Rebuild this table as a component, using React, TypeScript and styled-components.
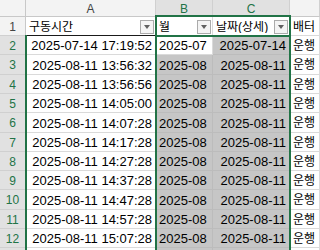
import React from "react";
import styled, { createGlobalStyle, css } from "styled-components";

const GREEN = "#217346";

const Global = createGlobalStyle`
  html, body { margin: 0; padding: 0; background: #ffffff; overflow: hidden; }
  body { font-family: "Liberation Sans", "Noto Sans CJK KR", sans-serif; }
  #root { width: 320px; height: 250px; }
`;

const Sheet = styled.div`
  position: relative;
  width: 320px;
  height: 250px;
  overflow: hidden;
  display: flex;
  flex-direction: column;
`;

const Row = styled.div<{ $h: number }>`
  display: grid;
  grid-template-columns: 26px 130px 57px 77px 1fr;
  height: ${(p) => p.$h}px;
  flex: none;
`;

const Corner = styled.div`
  background: #f3f3f3;
  border-right: 1px solid #c8c8c8;
  border-bottom: 1px solid #c8c8c8;
  box-sizing: border-box;
`;

const ColHead = styled.div<{ $sel?: boolean }>`
  box-sizing: border-box;
  display: flex;
  align-items: center;
  justify-content: center;
  font-size: 12px;
  line-height: 1;
  padding-top: 1px;
  background: ${(p) => (p.$sel ? "#e1e1e1" : "#f3f3f3")};
  color: ${(p) => (p.$sel ? GREEN : "#444444")};
  border-right: 1px solid #d0d0d0;
  border-bottom: 1px solid #c8c8c8;
`;

const RowHead = styled.div<{ $sel?: boolean }>`
  box-sizing: border-box;
  display: flex;
  align-items: center;
  justify-content: center;
  font-size: 12px;
  line-height: 1;
  padding-top: 1px;
  background: ${(p) => (p.$sel ? "#e1e1e1" : "#f3f3f3")};
  color: ${(p) => (p.$sel ? GREEN : "#444444")};
  border-right: 1px solid #c8c8c8;
  border-bottom: 1px solid #d0d0d0;
`;

const Cell = styled.div<{
  $align?: "left" | "right";
  $shade?: boolean;
  $ko?: boolean;
  $rule?: boolean;
}>`
  box-sizing: border-box;
  display: flex;
  align-items: center;
  justify-content: ${(p) => (p.$align === "right" ? "flex-end" : "flex-start")};
  padding: 1px 3px 0 3px;
  font-size: ${(p) => (p.$ko ? "12px" : "13px")};
  line-height: 1;
  color: #000000;
  white-space: nowrap;
  overflow: hidden;
  background: ${(p) => (p.$shade ? "#c6c6c6" : "#ffffff")};
  border-right: 1px solid ${(p) => (p.$shade ? "#bcbcbc" : "#dadada")};
  border-bottom: 1px solid ${(p) => (p.$shade ? "#bcbcbc" : "#dadada")};
  ${(p) =>
    p.$rule &&
    css`
      border-bottom-color: #1a1a1a;
    `}
`;

const HeadText = styled.span`
  flex: 1;
  overflow: hidden;
`;

const FilterBtn = styled.span`
  flex: none;
  box-sizing: border-box;
  width: 14px;
  height: 14px;
  margin-left: auto;
  margin-right: -2px;
  border: 1px solid #ababab;
  background: #f4f4f4;
  display: flex;
  align-items: center;
  justify-content: center;
  &::after {
    content: "";
    border-left: 3.5px solid transparent;
    border-right: 3.5px solid transparent;
    border-top: 4px solid #606060;
    margin-top: 1px;
  }
`;

const Selection = styled.div<{
  $left: number;
  $top: number;
  $width: number;
  $top2?: boolean;
}>`
  position: absolute;
  pointer-events: none;
  box-sizing: border-box;
  left: ${(p) => p.$left}px;
  top: ${(p) => p.$top}px;
  width: ${(p) => p.$width}px;
  height: 400px;
  border-left: 2px solid ${GREEN};
  border-right: 2px solid ${GREEN};
  border-top: ${(p) => (p.$top2 ? `2px solid ${GREEN}` : "none")};
`;

const heights = [19, 19, 20, 19, 19, 20, 19, 19, 19, 20, 19, 19, 19];

const times = [
  "2025-07-14 17:19:52",
  "2025-08-11 13:56:32",
  "2025-08-11 13:56:56",
  "2025-08-11 14:05:00",
  "2025-08-11 14:07:28",
  "2025-08-11 14:17:28",
  "2025-08-11 14:27:28",
  "2025-08-11 14:37:28",
  "2025-08-11 14:47:28",
  "2025-08-11 14:57:28",
  "2025-08-11 15:07:28",
];

export default function App() {
  return (
    <>
      <Global />
      <Sheet>
        <Row $h={17}>
          <Corner />
          <ColHead>A</ColHead>
          <ColHead $sel>B</ColHead>
          <ColHead $sel>C</ColHead>
          <ColHead />
        </Row>
        <Row $h={heights[0]}>
          <RowHead>1</RowHead>
          <Cell $ko $rule>
            <HeadText>구동시간</HeadText>
            <FilterBtn />
          </Cell>
          <Cell $ko>
            <HeadText>월</HeadText>
            <FilterBtn />
          </Cell>
          <Cell $ko>
            <HeadText>날짜(상세)</HeadText>
            <FilterBtn />
          </Cell>
          <Cell $ko>배터</Cell>
        </Row>
        {heights.slice(1).map((h, i) => {
          const n = i + 2;
          const t = times[i];
          const date = t ? t.slice(0, 10) : "";
          const month = t ? t.slice(0, 7) : "";
          return (
            <Row key={n} $h={h}>
              <RowHead $sel>{t ? n : ""}</RowHead>
              <Cell $align="right">{t}</Cell>
              <Cell $shade={n !== 2}>{month}</Cell>
              <Cell $shade $align="right">
                {date}
              </Cell>
              <Cell $ko>{t ? "운행" : ""}</Cell>
            </Row>
          );
        })}
        <Row $h={40}>
          <RowHead $sel />
          <Cell />
          <Cell $shade />
          <Cell $shade />
          <Cell />
        </Row>
        <Selection $left={25} $top={35} $width={132} />
        <Selection $left={155} $top={15} $width={136} $top2 />
        <Selection $left={155} $top={35} $width={136} $top2 />
      </Sheet>
    </>
  );
}
